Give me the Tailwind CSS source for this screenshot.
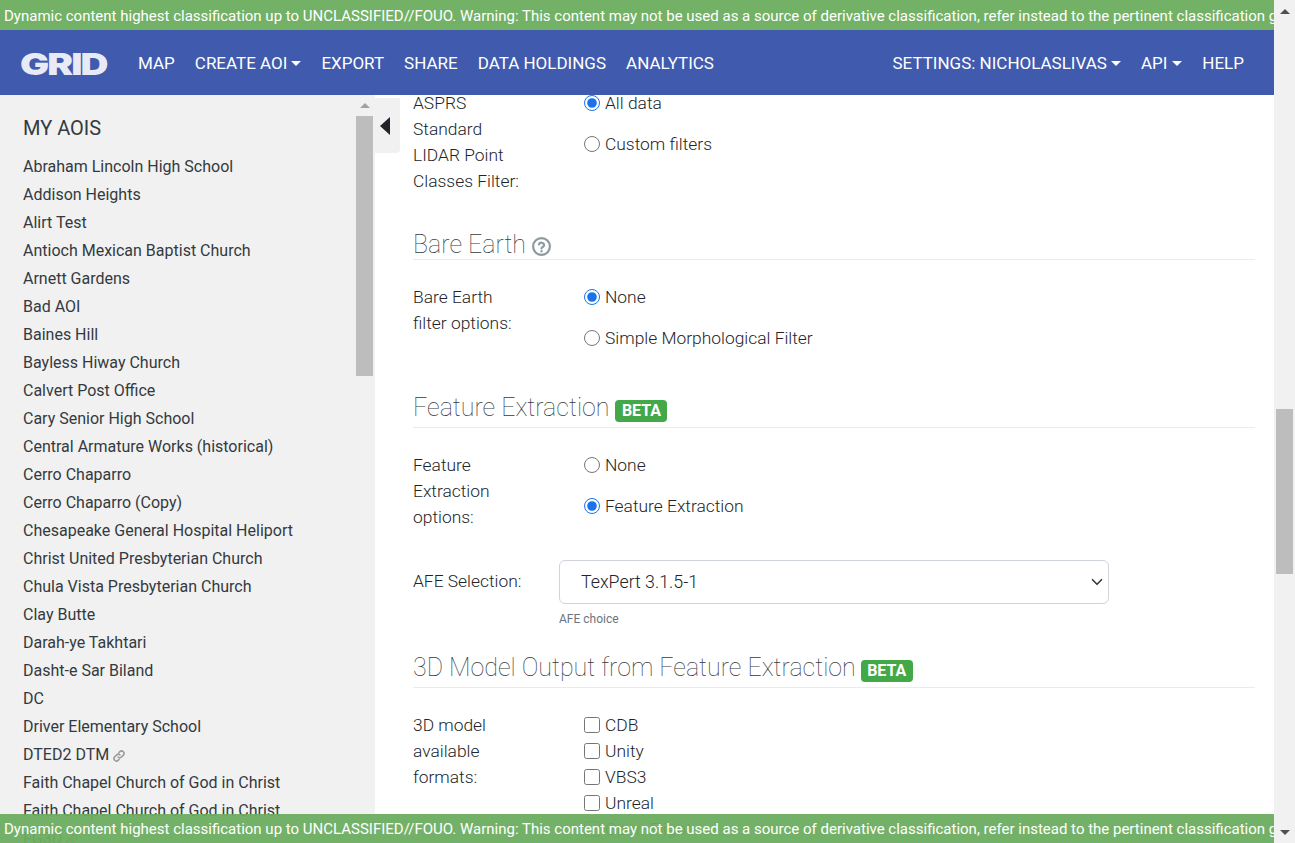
<!DOCTYPE html>
<html lang="en">
<head>
    <meta charset="UTF-8">
    <title>GRID</title>
    <script src="https://cdn.jsdelivr.net/npm/@tailwindcss/browser@4"></script>
</head>
<body class="h-screen overflow-hidden font-['Roboto',sans-serif] text-[#212529] bg-white">
<div class="flex h-[843px]">
    <!-- Page column -->
    <div class="relative w-[1274px] flex flex-col">
        <div class="h-[30px] shrink-0 bg-[#73b167] text-white text-[15px] leading-[32px] pl-1 whitespace-nowrap overflow-hidden">Dynamic content highest classification up to UNCLASSIFIED//FOUO. Warning: This content may not be used as a source of derivative classification, refer instead to the pertinent classification guide.</div>

        <!-- Navbar -->
        <nav class="h-[65px] shrink-0 bg-[#405aad] text-white text-[17px] flex items-center pt-[2px] pl-[21px] pr-[30px] whitespace-nowrap">
            <span class="font-['Inter',sans-serif] font-black text-[30px] leading-none text-[#e8ebf5] tracking-[-1.5px] scale-x-[1.29] origin-left w-[87px] -ml-[1px] mr-[1px]">GRID</span>
            <div class="flex items-center gap-5 ml-[30px]">
                <span>MAP</span>
                <span class="flex items-center">CREATE AOI<i class="ml-[4px] border-x-[5px] border-t-[5px] border-x-transparent border-t-white"></i></span>
                <span>EXPORT</span>
                <span>SHARE</span>
                <span>DATA HOLDINGS</span>
                <span>ANALYTICS</span>
            </div>
            <div class="flex items-center gap-5 ml-auto">
                <span class="flex items-center">SETTINGS: NICHOLASLIVAS<i class="ml-[4px] border-x-[5px] border-t-[5px] border-x-transparent border-t-white"></i></span>
                <span class="flex items-center">API<i class="ml-[5px] border-x-[5px] border-t-[5px] border-x-transparent border-t-white"></i></span>
                <span>HELP</span>
            </div>
        </nav>

        <div class="flex flex-1 min-h-0">
            <!-- Sidebar -->
            <aside class="w-[375px] shrink-0 bg-[#f1f1f1] flex overflow-hidden">
                <div class="w-[356px] shrink-0 pl-[23px] pt-[19px] whitespace-nowrap">
                    <h2 class="text-xl leading-[28px] mb-[11px] text-[#343a40]">MY AOIS</h2>
                    <ul class="text-base leading-[28px] text-[#343a40]">
                        <li>Abraham Lincoln High School</li>
                        <li>Addison Heights</li>
                        <li>Alirt Test</li>
                        <li>Antioch Mexican Baptist Church</li>
                        <li>Arnett Gardens</li>
                        <li>Bad AOI</li>
                        <li>Baines Hill</li>
                        <li>Bayless Hiway Church</li>
                        <li>Calvert Post Office</li>
                        <li>Cary Senior High School</li>
                        <li>Central Armature Works (historical)</li>
                        <li>Cerro Chaparro</li>
                        <li>Cerro Chaparro (Copy)</li>
                        <li>Chesapeake General Hospital Heliport</li>
                        <li>Christ United Presbyterian Church</li>
                        <li>Chula Vista Presbyterian Church</li>
                        <li>Clay Butte</li>
                        <li>Darah-ye Takhtari</li>
                        <li>Dasht-e Sar Biland</li>
                        <li>DC</li>
                        <li>Driver Elementary School</li>
                        <li class="flex items-center gap-[4px]">DTED2 DTM
                            <svg class="w-3 h-3 text-[#9a9a9a] mt-[2px]" viewBox="0 0 24 24" fill="none" stroke="currentColor" stroke-width="3.2" stroke-linecap="round"><path d="M10 14a5 5 0 0 0 7 0l4-4a5 5 0 0 0-7-7l-2 2"/><path d="M14 10a5 5 0 0 0-7 0l-4 4a5 5 0 0 0 7 7l2-2"/></svg>
                        </li>
                        <li>Faith Chapel Church of God in Christ</li>
                        <li>Faith Chapel Church of God in Christ</li>
                        <li class="flex items-center gap-[4px]">FG3D
                            <svg class="w-3 h-3 text-[#9a9a9a] mt-[2px]" viewBox="0 0 24 24" fill="none" stroke="currentColor" stroke-width="3.2" stroke-linecap="round"><path d="M10 14a5 5 0 0 0 7 0l4-4a5 5 0 0 0-7-7l-2 2"/><path d="M14 10a5 5 0 0 0-7 0l-4 4a5 5 0 0 0 7 7l2-2"/></svg>
                        </li>
                    </ul>
                </div>
                <!-- Sidebar scrollbar -->
                <div class="w-[17px] shrink-0 flex flex-col items-center">
                    <div class="h-[21px] flex items-center justify-center"><i class="border-x-[5px] border-b-[5px] border-x-transparent border-b-[#a3a3a3]"></i></div>
                    <div class="w-[17px] h-[260px] bg-[#bdbdbd]"></div>
                </div>
            </aside>

            <!-- Main form -->
            <main class="relative flex-1 overflow-hidden pl-[38px] pr-[19px] font-light text-[17.4px]">
                <div class="absolute left-0 top-[3px] w-[25px] h-[55px] bg-[#f1f1f1] rounded-br-[4px] flex items-center pl-[5px]">
                    <i class="border-y-[9px] border-r-[10px] border-y-transparent border-r-[#212529]"></i>
                </div>

                <div class="flex leading-[26px] mt-[-5px]">
                    <div class="w-[146px] shrink-0 pr-[30px]">ASPRS Standard LIDAR Point Classes Filter:</div>
                    <div class="pl-[25px] flex flex-col gap-[15px]">
                        <label class="flex items-center gap-[5px] h-[26px]"><input type="radio" name="asprs" checked class="w-4 h-4 m-0 accent-[#1a73e8]">All data</label>
                        <label class="flex items-center gap-[5px] h-[26px]"><input type="radio" name="asprs" class="w-4 h-4 m-0">Custom filters</label>
                    </div>
                </div>

                <h3 class="text-[25px] leading-[28px] font-thin text-[#343a40] mt-[37px] border-b border-[#e9ecef] flex items-center gap-[6px]">Bare Earth
                    <svg class="w-[19px] h-[19px] text-[#8b9ba0] mt-[2px]" viewBox="0 0 24 24" fill="none" stroke="currentColor" stroke-width="2.8" stroke-linecap="round"><circle cx="12" cy="12" r="10.6"/><path d="M8.8 9.4a3.3 3.3 0 0 1 6.4 1c0 2.2-3.2 2.4-3.2 4"/><path d="M12 17.8v.4"/></svg>
                </h3>
                <div class="flex leading-[26px] mt-[24px]">
                    <div class="w-[146px] shrink-0 pr-[30px]">Bare Earth filter options:</div>
                    <div class="pl-[25px] flex flex-col gap-[15px]">
                        <label class="flex items-center gap-[5px] h-[26px]"><input type="radio" name="bare" checked class="w-4 h-4 m-0 accent-[#1a73e8]">None</label>
                        <label class="flex items-center gap-[5px] h-[26px]"><input type="radio" name="bare" class="w-4 h-4 m-0">Simple Morphological Filter</label>
                    </div>
                </div>

                <h3 class="text-[25px] leading-[28px] font-thin text-[#343a40] mt-[43px] pb-[5px] border-b border-[#e9ecef] flex items-center gap-[6px]">Feature Extraction
                    <span class="bg-[#43a847] text-white text-base font-bold leading-[22px] h-[22px] w-[52px] text-center rounded translate-y-[3px]">BETA</span>
                </h3>
                <div class="flex leading-[26px] mt-[24px]">
                    <div class="w-[146px] shrink-0 pr-[30px]">Feature Extraction options:</div>
                    <div class="pl-[25px] flex flex-col gap-[15px]">
                        <label class="flex items-center gap-[5px] h-[26px]"><input type="radio" name="fe" class="w-4 h-4 m-0">None</label>
                        <label class="flex items-center gap-[5px] h-[26px]"><input type="radio" name="fe" checked class="w-4 h-4 m-0 accent-[#1a73e8]">Feature Extraction</label>
                    </div>
                </div>

                <div class="flex items-center mt-[30px]">
                    <label class="w-[146px] shrink-0 pb-[2px]">AFE Selection:</label>
                    <div class="relative w-[550px]">
                        <select class="appearance-none w-full h-[44px] pl-[21px] border border-[#ced4da] rounded-md bg-white text-[17.8px] font-light">
                            <option>TexPert 3.1.5-1</option>
                        </select>
                        <svg class="absolute right-[6px] top-[16px] w-[12px] h-[12px] text-[#343a40]" viewBox="0 0 16 16" fill="none" stroke="currentColor" stroke-width="2.2" stroke-linecap="round" stroke-linejoin="round"><path d="M2 5l6 6 6-6"/></svg>
                    </div>
                </div>
                <p class="ml-[146px] mt-[7px] text-xs leading-[16px] font-normal text-[#6c757d]">AFE choice</p>

                <h3 class="text-[25px] leading-[28px] font-thin text-[#343a40] mt-[27px] pb-[5px] border-b border-[#e9ecef] flex items-center gap-[5px]">3D Model Output from Feature Extraction
                    <span class="bg-[#43a847] text-white text-base font-bold leading-[22px] h-[22px] w-[52px] text-center rounded translate-y-[3px]">BETA</span>
                </h3>
                <div class="flex leading-[26px] mt-[24px]">
                    <div class="w-[146px] shrink-0 pr-[30px]">3D model available formats:</div>
                    <div class="pl-[25px] flex flex-col">
                        <label class="flex items-center gap-[5px] h-[26px]"><input type="checkbox" class="w-4 h-4 m-0">CDB</label>
                        <label class="flex items-center gap-[5px] h-[26px]"><input type="checkbox" class="w-4 h-4 m-0">Unity</label>
                        <label class="flex items-center gap-[5px] h-[26px]"><input type="checkbox" class="w-4 h-4 m-0">VBS3</label>
                        <label class="flex items-center gap-[5px] h-[26px]"><input type="checkbox" class="w-4 h-4 m-0">Unreal</label>
                        <label class="flex items-center gap-[5px] h-[26px]"><input type="checkbox" class="w-4 h-4 m-0">Open Flight</label>
                    </div>
                </div>
            </main>
        </div>

        <!-- Bottom banner sits over the page -->
        <div class="absolute left-0 right-0 bottom-0 h-[29px] bg-[#6dad60]/95 text-white text-[15px] leading-[31px] pl-1 whitespace-nowrap overflow-hidden">Dynamic content highest classification up to UNCLASSIFIED//FOUO. Warning: This content may not be used as a source of derivative classification, refer instead to the pertinent classification guide.</div>
    </div>

    <!-- Page scrollbar -->
    <div class="w-[21px] shrink-0 bg-[#f1f1f1] flex flex-col items-center">
        <div class="h-[21px] flex items-center justify-center pt-[2px]"><i class="border-x-[5px] border-b-[5px] border-x-transparent border-b-[#505050]"></i></div>
        <div class="mt-[388px] w-[17px] h-[165px] bg-[#bdbdbd]"></div>
        <div class="mt-auto h-[21px] flex items-center justify-center"><i class="border-x-[5px] border-t-[5px] border-x-transparent border-t-[#505050]"></i></div>
    </div>
</div>
</body>
</html>
